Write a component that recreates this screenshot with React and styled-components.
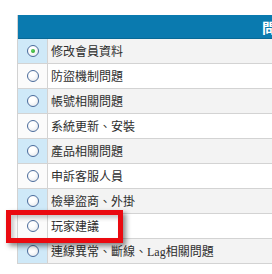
import React from 'react'
import styled, { createGlobalStyle } from 'styled-components'

const GlobalStyle = createGlobalStyle`
  html, body {
    margin: 0;
    padding: 0;
    background: #fff;
    overflow: hidden;
  }
  body {
    font-family: "Liberation Serif", "Noto Sans CJK TC", serif;
  }
`

const Page = styled.div`
  position: relative;
  width: 272px;
  height: 274px;
  padding: 15px 0 0 17px;
  box-sizing: border-box;
  overflow: hidden;
`

const Table = styled.div`
  width: 420px;
  border-left: 1px solid #d2d2d2;
`

const Header = styled.div`
  height: 24px;
  background: #0a7aaf;
  border-bottom: 1px solid #086996;
  color: #fff;
  font-family: "Noto Sans CJK TC", sans-serif;
  font-weight: bold;
  font-size: 14px;
  line-height: 24px;
  padding-left: 244px;
  box-sizing: border-box;
`

const Row = styled.div`
  display: grid;
  grid-template-columns: 30px 1fr;
  height: 25px;
  border-bottom: 1px solid #d3d3d3;
  box-sizing: border-box;
`

const RadioCell = styled.div`
  display: flex;
  align-items: center;
  justify-content: center;
  background: ${({ $odd }) => ($odd ? '#cfe9f8' : '#fbfbfb')};
  border-right: 1px solid #d3d3d3;
`

const LabelCell = styled.div`
  display: flex;
  align-items: center;
  padding-left: 3px;
  background: ${({ $odd }) => ($odd ? '#f3f3f3' : '#fff')};
  color: #2e2e2e;
  font-size: 12px;
  white-space: nowrap;
`

const Radio = styled.span`
  width: 12px;
  height: 12px;
  border-radius: 50%;
  border: 1px solid #4b6c9c;
  box-sizing: border-box;
  background: radial-gradient(circle at 40% 35%, #fff 30%, #dfe3e8 100%);
  display: flex;
  align-items: center;
  justify-content: center;
  margin-left: 1px;
  &::after {
    content: '';
    display: ${({ $checked }) => ($checked ? 'block' : 'none')};
    width: 4px;
    height: 4px;
    border-radius: 50%;
    background: radial-gradient(circle at 40% 40%, #5fd35f, #1f9a1f);
  }
`

const Highlight = styled.div`
  position: absolute;
  left: 6px;
  top: 210px;
  width: 117px;
  height: 33px;
  box-sizing: border-box;
  border: 5px solid #ea0a10;
  box-shadow: 3px 3px 5px rgba(0, 0, 0, 0.45), inset 3px 3px 4px rgba(0, 0, 0, 0.22);
  pointer-events: none;
`

const items = [
  '修改會員資料',
  '防盜機制問題',
  '帳號相關問題',
  '系統更新、安裝',
  '產品相關問題',
  '申訴客服人員',
  '檢舉盜商、外掛',
  '玩家建議',
  '連線異常、斷線、Lag相關問題',
]

export default function App() {
  return (
    <>
      <GlobalStyle />
      <Page>
        <Table>
          <Header>問題類型</Header>
          {items.map((label, i) => (
            <Row key={label}>
              <RadioCell $odd={i % 2 === 0}>
                <Radio $checked={i === 0} />
              </RadioCell>
              <LabelCell $odd={i % 2 === 0}>{label}</LabelCell>
            </Row>
          ))}
        </Table>
        <Highlight />
      </Page>
    </>
  )
}
